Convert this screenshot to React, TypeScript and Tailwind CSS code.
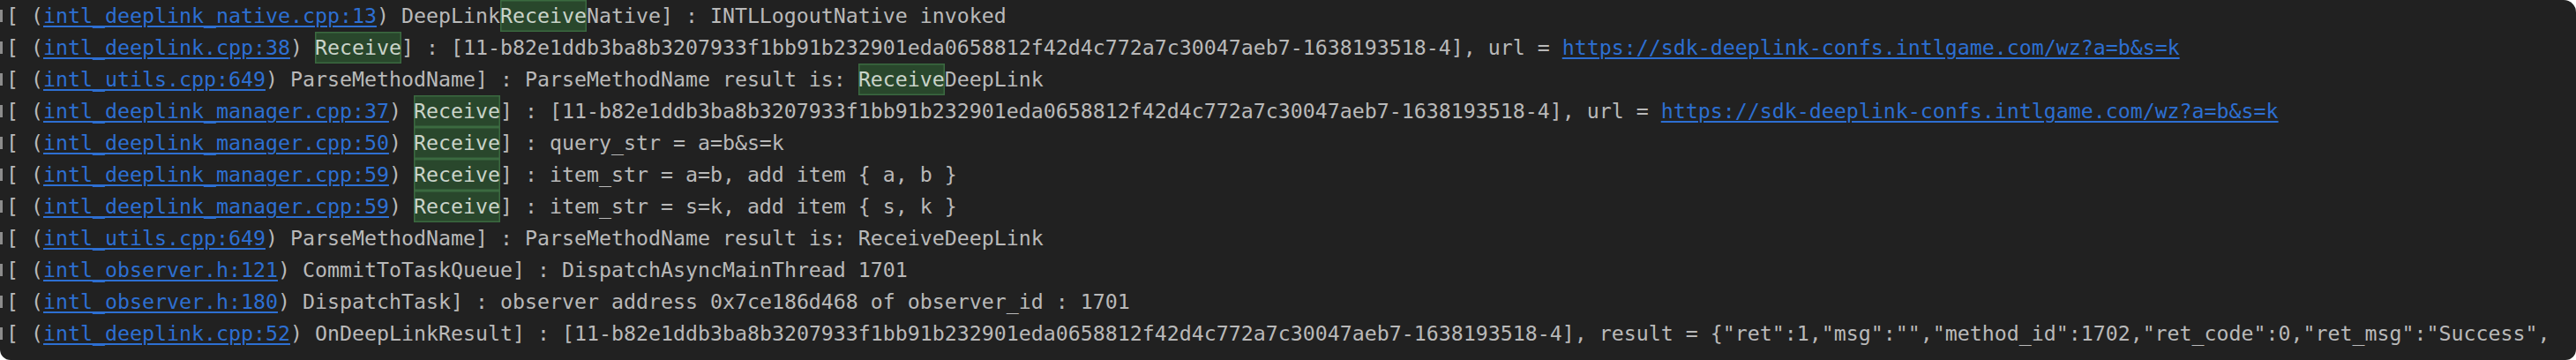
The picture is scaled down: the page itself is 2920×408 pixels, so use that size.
type Part = { t: string; k?: "link" | "hit" };

interface LogLine {
  file: string;
  parts: Part[];
}

const hash = "11-b82e1ddb3ba8b3207933f1bb91b232901eda0658812f42d4c772a7c30047aeb7-1638193518-4";
const url = "https://sdk-deeplink-confs.intlgame.com/wz?a=b&s=k";

const lines: LogLine[] = [
  {
    file: "intl_deeplink_native.cpp:13",
    parts: [{ t: "DeepLink" }, { t: "Receive", k: "hit" }, { t: "Native] : INTLLogoutNative invoked" }],
  },
  {
    file: "intl_deeplink.cpp:38",
    parts: [{ t: "Receive", k: "hit" }, { t: `] : [${hash}], url = ` }, { t: url, k: "link" }],
  },
  {
    file: "intl_utils.cpp:649",
    parts: [{ t: "ParseMethodName] : ParseMethodName result is: " }, { t: "Receive", k: "hit" }, { t: "DeepLink" }],
  },
  {
    file: "intl_deeplink_manager.cpp:37",
    parts: [{ t: "Receive", k: "hit" }, { t: `] : [${hash}], url = ` }, { t: url, k: "link" }],
  },
  {
    file: "intl_deeplink_manager.cpp:50",
    parts: [{ t: "Receive", k: "hit" }, { t: "] : query_str = a=b&s=k" }],
  },
  {
    file: "intl_deeplink_manager.cpp:59",
    parts: [{ t: "Receive", k: "hit" }, { t: "] : item_str = a=b, add item { a, b }" }],
  },
  {
    file: "intl_deeplink_manager.cpp:59",
    parts: [{ t: "Receive", k: "hit" }, { t: "] : item_str = s=k, add item { s, k }" }],
  },
  {
    file: "intl_utils.cpp:649",
    parts: [{ t: "ParseMethodName] : ParseMethodName result is: ReceiveDeepLink" }],
  },
  {
    file: "intl_observer.h:121",
    parts: [{ t: "CommitToTaskQueue] : DispatchAsyncMainThread 1701" }],
  },
  {
    file: "intl_observer.h:180",
    parts: [{ t: "DispatchTask] : observer address 0x7ce186d468 of observer_id : 1701" }],
  },
  {
    file: "intl_deeplink.cpp:52",
    parts: [
      {
        t: `OnDeepLinkResult] : [${hash}], result = {"ret":1,"msg":"","method_id":1702,"ret_code":0,"ret_msg":"Success",`,
      },
    ],
  },
];

function Link({ children }: { children: string }) {
  return (
    <span className="text-[#2d6fd2] underline decoration-2 underline-offset-[3px] decoration-[#2d6fd2]">
      {children}
    </span>
  );
}

function Row({ line }: { line: LogLine }) {
  return (
    <div className="flex items-center h-[36px]">
      <div className="w-[3px] h-[14px] bg-[#8c8c8c] shrink-0" />
      <div className="whitespace-pre ml-[4px] leading-[36px]">
        {"[ ("}
        <Link>{line.file}</Link>
        {") "}
        {line.parts.map((p, i) =>
          p.k === "link" ? (
            <Link key={i}>{p.t}</Link>
          ) : p.k === "hit" ? (
            <span
              key={i}
              className="inline-block align-top h-[36px] bg-[#29472c] text-[#c9d3c9] shadow-[inset_0_0_0_1.5px_#3b6a40]"
            >
              {p.t}
            </span>
          ) : (
            <span key={i}>{p.t}</span>
          )
        )}
      </div>
    </div>
  );
}

export default function App() {
  return (
    <div className="w-[2920px] h-[408px] bg-white">
      <div
        className="w-full h-full bg-[#212121] rounded-tr-[14px] rounded-b-[12px] overflow-hidden text-[#b9b9b9] text-[23.25px]"
        style={{ fontFamily: '"DejaVu Sans Mono", Menlo, monospace' }}
      >
        {lines.map((l, i) => (
          <Row key={i} line={l} />
        ))}
      </div>
    </div>
  );
}
